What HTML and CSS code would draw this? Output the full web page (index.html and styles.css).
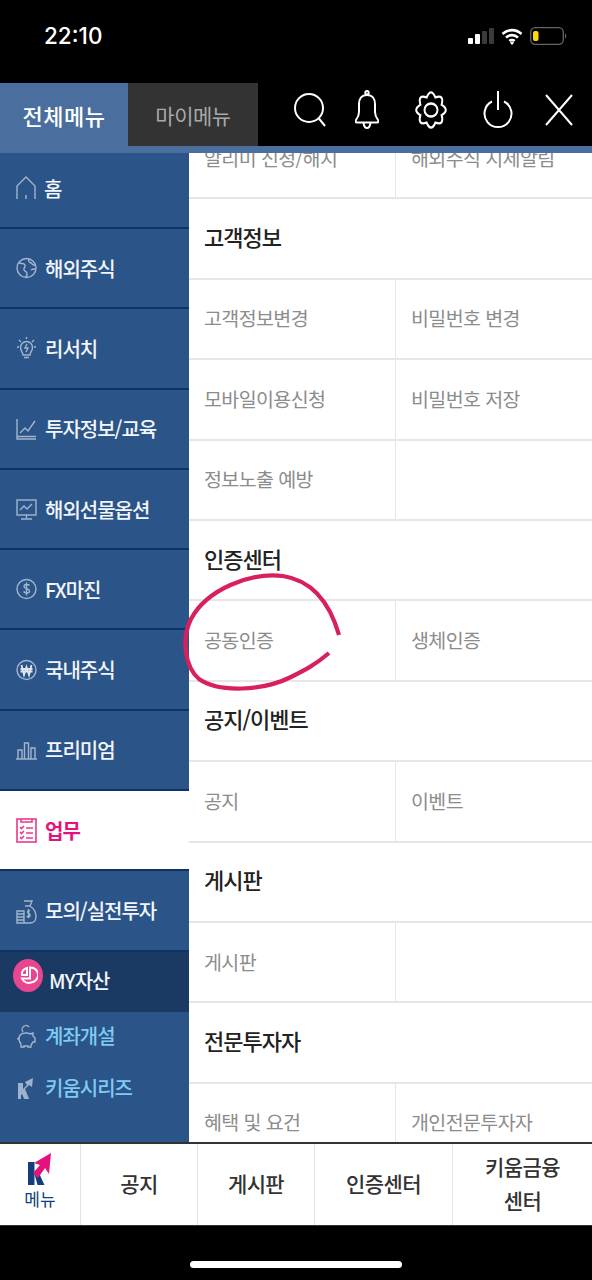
FILE: index.html
```html
<!DOCTYPE html>
<html lang="ko">

<head>
    <meta charset="utf-8">
    <title>전체메뉴</title>
    <link rel="stylesheet" href="styles.css">
</head>

<body>
    <div class="phone">
        <!-- 상태바 -->
        <div class="statusbar">
            <span class="time">22:10</span>
            <div class="status-icons">
                <svg width="26" height="16" viewBox="0 0 26 16"><rect x="0" y="10" width="5" height="6" rx="1" fill="#fff"/><rect x="7" y="6" width="5" height="10" rx="1" fill="#fff"/><rect x="14" y="3" width="5" height="13" rx="1" fill="#3a3a3a"/><rect x="21" y="0" width="5" height="16" rx="1" fill="#3a3a3a"/></svg>
                <svg width="22" height="17" viewBox="0 0 22 17" fill="none" stroke="#fff" stroke-width="2.600"><path d="M1.500 6a13.500 13.500 0 0 1 19 0"/><path d="M5 9.600a8.500 8.500 0 0 1 12 0"/><path d="M8.400 13a3.700 3.700 0 0 1 5.200 0"/><path d="M11 16.900l-2-2.400a3 3 0 0 1 4 0z" fill="#fff" stroke="none"/></svg>
                <svg width="37" height="18" viewBox="0 0 37 18"><rect x="0.700" y="0.700" width="32.600" height="16.600" rx="4.500" fill="none" stroke="#666" stroke-width="1.300"/><rect x="3" y="4" width="5.500" height="10" rx="2" fill="#ffd60a"/><path d="M35 6.500a3 3 0 0 1 0 5z" fill="#666"/></svg>
            </div>
        </div>

        <!-- 상단 탭 -->
        <div class="topbar">
            <div class="tab active">전체메뉴</div>
            <div class="tab">마이메뉴</div>
            <div class="actions">
                <svg width="32" height="34" viewBox="0 0 32 34" fill="none" stroke="#fff" stroke-width="2"><circle cx="15" cy="15" r="14"/><path d="M24.500 25l6.500 8"/></svg>
                <svg width="24" height="40" viewBox="0 0 24 40" fill="none" stroke="#fff" stroke-width="2"><circle cx="12" cy="2.700" r="1.700"/><path d="M12 5C6.500 5 4 9 4 14v8c0 4-1.500 6-3 8-1 1.300-.5 2.500 1 2.500h20c1.500 0 2-1.200 1-2.500-1.500-2-3-4-3-8v-8c0-5-2.500-9-8-9z" stroke-linejoin="round"/><path d="M8.500 33c.5 3 1.700 5 3.500 5s3-2 3.500-5"/></svg>
                <svg width="32" height="38" viewBox="0 0 32 32" preserveAspectRatio="none" fill="none" stroke="#fff" stroke-width="2"><ellipse cx="16" cy="16" rx="6.500" ry="5.500"/><path d="M11.600 5.400Q16 -3 20.400 5.400Q29.400 2.600 26.600 11.600Q35 16 26.600 20.400Q29.400 29.400 20.400 26.600Q16 35 11.600 26.600Q2.600 29.400 5.400 20.400Q-3 16 5.400 11.600Q2.600 2.600 11.600 5.400z"/></svg>
                <svg width="30" height="38" viewBox="0 0 30 38" fill="none" stroke="#fff" stroke-width="2"><path d="M15 0v19"/><path d="M9 10.500a13.500 13.500 0 1 0 12 0"/></svg>
                <svg width="28" height="32" viewBox="0 0 28 32" fill="none" stroke="#fff" stroke-width="2"><path d="M1 1l26 30M27 1L1 31"/></svg>
            </div>
        </div>
        <div class="topline"></div>

        <div class="main">
            <!-- 좌측 메뉴 -->
            <ul class="sidemenu">
                <li>
                    <svg class="ico" width="20" height="24" viewBox="0 0 20 24"><path d="M1 23V10L10 1l9 9v13M10 19v4"/></svg>
                    <span>홈</span>
                </li>
                <li>
                    <svg class="ico" width="21" height="24" viewBox="0 0 21 24"><circle cx="10.500" cy="12" r="9.500"/><path d="M3 7c3 1 5 0 6 2s-2 3-1 5 3 1 3 4-1 3-2 3M13 3c-1 2 0 3 2 4s2 3 5 2M15 14c1-1 3-1 4-1"/></svg>
                    <span>해외주식</span>
                </li>
                <li>
                    <svg class="ico" width="21" height="24" viewBox="0 0 21 24"><path d="M7 19c0-3-2.500-4-2.500-7.500a6 6 0 0 1 12 0C16.500 15 14 16 14 19zM8 21.500h5M11 8l-2 4h3l-2 4M10.500 1v2M1 11h2M18 11h2M3 4l2 2M18 4l-2 2"/></svg>
                    <span>리서치</span>
                </li>
                <li>
                    <svg class="ico" width="21" height="24" viewBox="0 0 21 24"><path d="M1 2v20h19M1 19.500h19M4 16l5-5 3 3 7-10"/></svg>
                    <span>투자정보/교육</span>
                </li>
                <li>
                    <svg class="ico" width="21" height="24" viewBox="0 0 21 24"><rect x="1" y="3" width="19" height="15"/><path d="M4 13l4-4 3 3 5-5M10.500 18v3M5 22h11"/></svg>
                    <span>해외선물옵션</span>
                </li>
                <li>
                    <svg class="ico" width="21" height="24" viewBox="0 0 21 24"><circle cx="10.500" cy="12" r="9.500"/><path d="M13.500 8.500c-1-1.500-5.500-1.500-5.500 1s5.500 2 5.500 4.500-4.500 2.500-6 .5M10.500 5.500v13"/></svg>
                    <span>FX마진</span>
                </li>
                <li>
                    <svg class="ico" width="21" height="24" viewBox="0 0 21 24"><circle cx="10.500" cy="12" r="9.500"/><path class="thick" d="M5.500 7l2.500 10 2.500-8 2.500 8 2.500-10M4.500 11h12M4.500 13.500h12"/></svg>
                    <span>국내주식</span>
                </li>
                <li>
                    <svg class="ico" width="21" height="24" viewBox="0 0 21 24"><path d="M0 21h21M2 21v-9h4v9M8.500 21V5h4v16M15 21V10h4v11"/></svg>
                    <span>프리미엄</span>
                </li>
                <li class="on">
                    <svg class="ico" width="21" height="26" viewBox="0 0 21 26"><rect x="1" y="2" width="19" height="23"/><path d="M5 2v3h11V2M4 10l1.500 1.500L8 9M4 15l1.500 1.500L8 14M4 20l1.500 1.500L8 19M10 11h7M10 16h7M10 21h7"/></svg>
                    <span>업무</span>
                </li>
                <li>
                    <svg class="ico" width="21" height="26" viewBox="0 0 21 26"><path d="M1 13h7v12H1zM1 16h7M1 19h7M1 22h7M8 3h8l-2 5c3 2 6 6 6 11 0 4-3 6-6 6H8M9 8h5M14 13c-2-1-3 1-2 2s3 1 2 3-3 1-3 0M12.500 11v9"/></svg>
                    <span>모의/실전투자</span>
                </li>
                <li class="asset">
                    <span class="asset-badge">
                        <svg width="20" height="20" viewBox="0 0 20 20" fill="none" stroke="#fff" stroke-width="2"><path d="M4 10a6 6 0 0 1 5-7v7zM12 2.500a7 7 0 0 1 1 15c-3 1-7 0-9-4h8z"/></svg>
                    </span>
                    <span>MY자산</span>
                </li>
                <li class="sub">
                    <svg class="ico" width="21" height="24" viewBox="0 0 21 24"><path d="M3 15c0-4 3-6 7-6 2 0 3 0 4 1l3-1v3l2 2v4h-2l-2 3v2h-3v-1H8v1H5v-3c-1-1-2-3-2-5zM7 8a3.500 3.500 0 0 1 6-5M10 1l3 2M1 15c1 0 2-1 2-2"/></svg>
                    <span>계좌개설</span>
                </li>
                <li class="sub">
                    <svg width="21" height="22" viewBox="0 0 21 22"><path d="M2 6h5v6l4-4-2-3 8-4-1 9-3-2-4 4 5 12H9l-3-7-1 1v6H2z" fill="#9db2cb"/></svg>
                    <span>키움시리즈</span>
                </li>
            </ul>

            <!-- 우측 메뉴 -->
            <div class="content">
                <div class="scroll">
                    <div class="row">
                        <div class="cell">알리미 신청/해지</div>
                        <div class="cell">해외주식 시세알림</div>
                    </div>
                    <div class="heading">고객정보</div>
                    <div class="row">
                        <div class="cell">고객정보변경</div>
                        <div class="cell">비밀번호 변경</div>
                    </div>
                    <div class="row">
                        <div class="cell">모바일이용신청</div>
                        <div class="cell">비밀번호 저장</div>
                    </div>
                    <div class="row">
                        <div class="cell">정보노출 예방</div>
                        <div class="cell"></div>
                    </div>
                    <div class="heading">인증센터</div>
                    <div class="row">
                        <div class="cell">공동인증</div>
                        <div class="cell">생체인증</div>
                    </div>
                    <div class="heading">공지/이벤트</div>
                    <div class="row">
                        <div class="cell">공지</div>
                        <div class="cell">이벤트</div>
                    </div>
                    <div class="heading">게시판</div>
                    <div class="row">
                        <div class="cell">게시판</div>
                        <div class="cell"></div>
                    </div>
                    <div class="heading">전문투자자</div>
                    <div class="row">
                        <div class="cell">혜택 및 요건</div>
                        <div class="cell">개인전문투자자</div>
                    </div>
                </div>
            </div>
        </div>

        <!-- 하단 메뉴 -->
        <div class="bottombar">
            <div class="logo">
                <svg width="32" height="36" viewBox="0 0 32 36"><path d="M4 11h6.500v23H4z" fill="#123f7c"/><path d="M10.500 23l4-2 6 13h-7z" fill="#123f7c"/><path d="M10 12L27 2l-2 21-4-6-7 10-5-5 7-8z" fill="#e5127d"/></svg>
                <span>메뉴</span>
            </div>
            <div class="bottom-item">공지</div>
            <div class="bottom-item">게시판</div>
            <div class="bottom-item wide">인증센터</div>
            <div class="bottom-item last">키움금융<br>센터</div>
        </div>
        <div class="homebar"><span></span></div>

        <!-- 손으로 그린 동그라미 -->
        <svg class="scribble" width="170" height="130" viewBox="0 0 170 130" fill="none"><path d="M156 62C148 34 132 8 100 3 68 -1 24 16 8 46-2 66 2 94 16 106c20 14 64 12 92-2 14-7 24-12 38-24" stroke="#d8205f" stroke-width="4.200"/></svg>
    </div>
</body>

</html>
```

FILE: styles.css
```css
* {
    box-sizing: border-box;
}

body {
    margin: 0;
    padding: 0;
    background-color: #000;
    font-family: "Noto Sans CJK KR", "Noto Sans", sans-serif;
}

ul {
    list-style-type: none;
    margin: 0;
    padding: 0;
}

.phone {
    position: relative;
    width: 592px;
    height: 1280px;
    overflow: hidden;
    display: flex;
    flex-direction: column;
    background-color: #000;
}

/*상태바*/

.statusbar {
    height: 83px;
    flex: none;
    display: flex;
    justify-content: space-between;
    padding: 21px 25px 0 44px;
    color: #fff;
}

.time {
    font-family: Inter, "Liberation Sans", sans-serif;
    font-size: 22.500px;
    font-weight: 500;
    line-height: 30px;
}

.status-icons {
    display: flex;
    align-items: center;
    gap: 7px;
    height: 30px;
}

/*상단 탭*/

.topbar {
    height: 63px;
    flex: none;
    display: flex;
}

.tab {
    width: 130px;
    display: flex;
    align-items: center;
    justify-content: center;
    background-color: #333;
    color: #a8a8a8;
    font-size: 21px;
    letter-spacing: -.5px;
}

.tab.active {
    width: 128px;
    background-color: #4a6f9e;
    color: #fff;
    font-weight: 500;
    font-size: 22px;
    letter-spacing: .5px;
}

.actions {
    flex: 1;
    display: flex;
    align-items: center;
    padding: 0 0 10px 36px;
}

.actions > svg:nth-child(2) {
    margin-left: 29px;
}

.actions > svg:nth-child(3) {
    margin-left: 36px;
}

.actions > svg:nth-child(4) {
    margin-left: 36px;
}

.actions > svg:nth-child(5) {
    margin-left: 32px;
}

.topline {
    height: 7px;
    flex: none;
    background-color: #4a6f9e;
}

.main {
    height: 989px;
    flex: none;
    display: flex;
    background-color: #fff;
}

/*좌측 메뉴*/

.sidemenu {
    width: 189px;
    flex: none;
    background-color: #2b5488;
    color: #fff;
    font-size: 20px;
    font-weight: 500;
    letter-spacing: -1px;
}

.sidemenu > li {
    height: 80.3px;
    display: flex;
    align-items: center;
    gap: 8px;
    padding: 0 0 0 16px;
    border-bottom: 2px solid #0f3268;
    color: #f2f5f9;
}

.sidemenu > li:first-child {
    height: 76px;
    padding-bottom: 4px;
}

.ico {
    flex: none;
    fill: none;
    stroke: #a3b5cc;
    stroke-width: 1.400;
}

.ico .thick {
    stroke: #dfe6ef;
    stroke-width: 1.800;
}

.sidemenu > li.on {
    background-color: #fff;
    color: #e5127d;
    font-weight: 700;
}

.sidemenu > li.on .ico {
    stroke: #e8388f;
    stroke-width: 1.600;
}

.sidemenu > li.asset {
    height: 60px;
    gap: 6px;
    padding: 0 0 2px 13px;
    border-bottom: 0;
    background-color: #1a3a63;
}

.asset-badge {
    width: 30px;
    height: 33px;
    flex: none;
    display: flex;
    align-items: center;
    justify-content: center;
    margin-top: -11px;
    border-radius: 50%;
    background-color: #e8468f;
}

.sidemenu > li.sub {
    height: 52px;
    padding: 0 0 4px 16px;
    border-bottom: 0;
    color: #7fcbf2;
}

/*우측 메뉴*/

.content {
    flex: 1;
    overflow: hidden;
}

.scroll {
    margin-top: -34px;
}

.row {
    height: 80.4px;
    display: flex;
    border-bottom: 2px solid #e6e6e6;
}

.cell {
    display: flex;
    align-items: center;
    color: #8c8c8c;
    font-size: 19.500px;
    letter-spacing: -.6px;
    padding: 0 0 2px 15px;
}

.cell:first-child {
    width: 207px;
    border-right: 1px solid #e6e6e6;
}

.cell:last-child {
    flex: 1;
}

.heading {
    height: 80.4px;
    display: flex;
    align-items: center;
    padding: 0 0 5px 15px;
    border-bottom: 2px solid #e6e6e6;
    color: #222;
    font-size: 22px;
    font-weight: 500;
    letter-spacing: -1px;
}

/*하단 메뉴*/

.bottombar {
    height: 84px;
    flex: none;
    display: flex;
    background-color: #fff;
    border-top: 2px solid #333;
    border-bottom: 1px solid #333;
}

.logo {
    width: 81px;
    flex: none;
    display: flex;
    flex-direction: column;
    align-items: center;
    padding-top: 7px;
    border-right: 1px solid #e2e2e2;
    color: #123f7c;
    font-size: 17px;
    line-height: 24px;
}

.bottom-item {
    width: 117px;
    flex: none;
    display: flex;
    align-items: center;
    justify-content: center;
    text-align: center;
    padding-bottom: 3px;
    border-right: 1px solid #e2e2e2;
    color: #333;
    font-size: 21px;
    font-weight: 500;
    line-height: 34px;
    letter-spacing: -.6px;
}

.bottom-item.wide {
    width: 138px;
}

.bottom-item.last {
    flex: 1;
    border-right: 0;
}

.homebar {
    flex: 1;
    display: flex;
    justify-content: center;
    padding-top: 35px;
}

.homebar > span {
    width: 212px;
    height: 7px;
    border-radius: 4px;
    background-color: #fff;
}

.scribble {
    position: absolute;
    left: 183px;
    top: 573px;
}
```
